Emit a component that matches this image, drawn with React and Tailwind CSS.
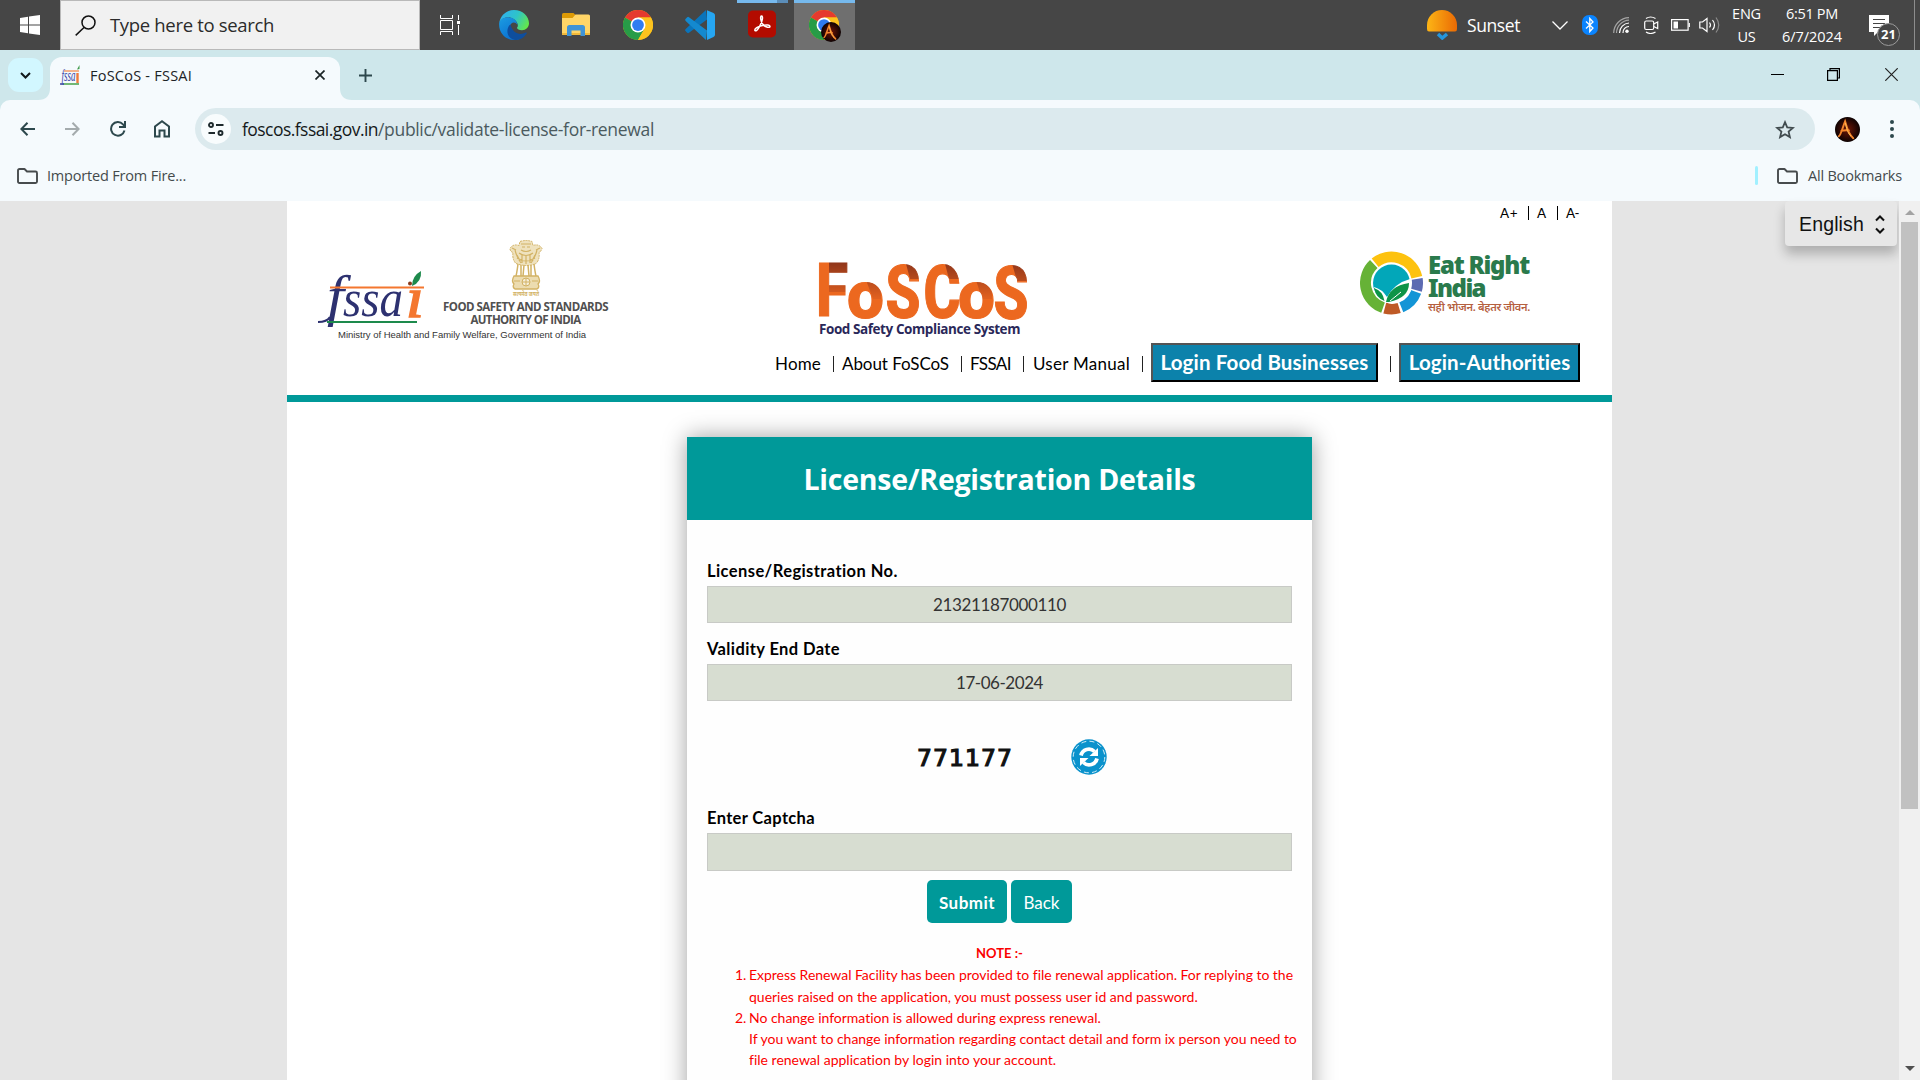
import React, { useLayoutEffect, useRef } from "react";

/* Spreads a single line of text evenly over the width of its box. */
function Fit({ className = "", children }) {
  const box = useRef(null);
  const text = useRef(null);
  useLayoutEffect(() => {
    const fit = () => {
      if (!box.current || !text.current) return;
      text.current.style.letterSpacing = "0px";
      const want = box.current.clientWidth;
      const got = text.current.getBoundingClientRect().width;
      const n = text.current.textContent.length;
      text.current.style.letterSpacing = `${(want - got) / Math.max(1, n)}px`;
    };
    fit();
    document.fonts?.ready.then(fit);
  }, []);
  return (
    <span ref={box} className={`block shrink-0 whitespace-nowrap ${className}`}>
      <span ref={text} className="inline-block">{children}</span>
    </span>
  );
}

function ChromeLogo({ size = 30 }) {
  return (
    <svg width={size} height={size} viewBox="0 0 48 48">
      <circle cx="24" cy="24" r="24" fill="#fbbc05" />
      <path d="M24 24 3.2 12A24 24 0 0 1 44.8 12H24z" fill="#e53a2e" />
      <path d="M3.2 12A24 24 0 0 0 24 48L34.4 30 24 24z" fill="#279c47" />
      <path d="M24 12h20.8A24 24 0 0 1 24 48l10.4-18z" fill="#fcc31e" />
      <circle cx="24" cy="24" r="12" fill="#fff" />
      <circle cx="24" cy="24" r="9.4" fill="#2f7cf0" />
    </svg>
  );
}

function EdgeLogo() {
  return (
    <svg width="30" height="30" viewBox="0 0 30 30">
      <defs>
        <linearGradient id="edgeTop" x1="0" y1="0.3" x2="1" y2="0.7">
          <stop offset="0" stopColor="#2fb0ee" />
          <stop offset="0.5" stopColor="#2ec4c9" />
          <stop offset="1" stopColor="#66e845" />
        </linearGradient>
        <linearGradient id="edgeLow" x1="0" y1="0" x2="0.6" y2="1">
          <stop offset="0" stopColor="#1b9de2" />
          <stop offset="1" stopColor="#0b6fd0" />
        </linearGradient>
      </defs>
      <path d="M.3 13C1.500 5 8 0 15 0c8.500 0 15 6.300 15 13.300 0 4-3.200 6.900-7 6.900-3.200 0-5.300-1.400-4.900-2.600.9-1.200 1-2.600.3-4.100C16.800 9.800 13 7.300 9 7.300 5 7.300 1.800 9.600.3 13z" fill="url(#edgeTop)" />
      <path d="M.2 12.700C1.500 9.300 5 7.200 9 7.200c5 0 9.300 3.500 9.300 7.500-2-3.500-6.500-2.800-7.300 1.500C10 22 14 27 20.500 28.900 18.500 29.800 17 30 15 30 6.500 30-.8 22.500.2 12.700z" fill="url(#edgeLow)" />
      <path d="M11.500 14c-5.500 5.500-3.500 14.500 4.500 16 5 .3 9.500-2.500 11.800-6.700.3-.7-.3-1.100-1-.7-6 3.200-13.800.5-15.300-8.600z" fill="#0e4e9e" />
    </svg>
  );
}

function FlameA({ size }) {
  return (
    <svg width={size} height={size} viewBox="0 0 26 26">
      <defs>
        <radialGradient id="flame">
          <stop offset="0" stopColor="#6e1606" />
          <stop offset="1" stopColor="#0d0202" />
        </radialGradient>
      </defs>
      <circle cx="13" cy="13" r="13" fill="url(#flame)" />
      <path d="M4 20c2-.5 3.500-8 6.500-15.500C12 9 13 17 19 22M6.500 14.500c3-.8 5-1 8-.5" stroke="#f5852c" strokeWidth="2" fill="none" strokeLinecap="round" />
      <path d="M10.700 6c1 5 3 12 6 14" stroke="#ffc65c" strokeWidth=".9" fill="none" />
    </svg>
  );
}

function Taskbar() {
  return (
    <div className="flex h-[50px] w-full shrink-0 items-center bg-[#464646] text-white">
      <div className="flex w-[60px] justify-center">
        <svg width="20" height="20" viewBox="0 0 20 20" fill="#fff">
          <path d="M0 2.900 8 1.800V9.500H0zM9 1.600 20 0v9.500H9zM0 10.500h8v7.700l-8-1.100zM9 10.500h11V20L9 18.400z" />
        </svg>
      </div>
      <div className="flex h-[50px] w-[360px] items-center border border-[#b9b9b9] bg-[#f1f1f1] pl-[14px]">
        <svg width="21" height="21" viewBox="0 0 21 21" fill="none" stroke="#111" strokeWidth="1.500">
          <circle cx="13.500" cy="7.500" r="6.500" />
          <path d="M9 12.500.7 20.400" />
        </svg>
        <Fit className="ml-[14px] w-[164px] text-[18.500px] leading-6 text-[#2b2b2b]">Type here to search</Fit>
      </div>
      <svg className="ml-5" width="20" height="20" viewBox="0 0 20 20" fill="none" stroke="#fff" strokeWidth="1">
        <path d="M.5 0v3.500h12V0M.5 5.500h12v9H.5zM.5 20v-3.500h12V20M18.500 0v5M18.500 10v10" />
        <rect x="17" y="6" width="3" height="3" fill="#fff" stroke="none" />
      </svg>
      <div className="ml-[39px]"><EdgeLogo /></div>
      <svg className="ml-[33px]" width="28" height="24" viewBox="0 0 28 24">
        <path d="M0 1.500Q0 0 1.500 0h10L13.500 2v5H0z" fill="#dd9a05" />
        <path d="M0 5h10.500l3-3.500H26.500Q28 1.500 28 3v19H0z" fill="#ffd567" />
        <path d="M0 20h28v2H0z" fill="#f1b93a" />
        <path d="M5 23V14.500Q5 12 7.500 12H20.500Q23 12 23 14.500V23H18.500V17.500H9.500V23z" fill="#3f93d6" />
      </svg>
      <div className="ml-[33px]"><ChromeLogo /></div>
      <svg className="ml-[32px]" width="30" height="30" viewBox="0 0 30 30">
        <path d="M22 9.500 4 22.800Q3 23.500 2.200 22.700L.5 21Q-.3 20 .7 19.100L21 0z" fill="#0a74bb" />
        <path d="M22 20.500 4 7.200Q3 6.500 2.200 7.300L.5 9Q-.3 10 .7 10.900L21 30z" fill="#1489cf" />
        <path d="M22 .2 28.500 3Q30 3.700 30 5.300V24.700Q30 26.300 28.500 27L22 29.900z" fill="#26a6f2" />
      </svg>
      <div className="ml-[22px] flex h-[50px] w-[51px] flex-col">
        <div className="flex h-[3px]">
          <div className="w-[40px] bg-[#76b9ed]" />
          <div className="w-[11px] bg-[#5b8db8]" />
        </div>
        <svg className="ml-[11px] mt-[7px]" width="28" height="28" viewBox="0 0 28 28">
          <rect y=".5" width="28" height="27" rx="5" fill="#b30b00" />
          <path d="M7 20.500c-1-1.500 3-4.300 7.500-5.100 4.500-.9 7.500-.3 7.500 1 0 1.800-4.500.9-7-2-2.500-3-3-8.400-1.500-8.400 1.800 0 1 5-1.500 9.700C10 19.500 8 21.700 7 20.500z" fill="none" stroke="#fff" strokeWidth="1.500" />
        </svg>
      </div>
      <div className="ml-[6px] h-[50px] w-[61px] border-t-[3px] border-[#76b9ed] bg-[#6f6f6f]">
        <div className="relative ml-[15px] mt-[7px] h-[32px] w-[32px]">
          <ChromeLogo />
          <div className="absolute left-[12px] top-[12px]"><FlameA size={20} /></div>
        </div>
      </div>

      <svg className="ml-auto" width="30" height="30" viewBox="0 0 30 30">
        <defs>
          <linearGradient id="sun"><stop offset="0" stopColor="#fdb515" /><stop offset="1" stopColor="#ea6a04" /></linearGradient>
        </defs>
        <path d="M2 21.500Q0 21.500 0 19V15a15 15 0 0 1 30 0v4q0 2.500-2 2.500z" fill="url(#sun)" />
        <path d="m11 24 4.300 4L20 24" fill="none" stroke="#2596dc" strokeWidth="3.500" />
      </svg>
      <Fit className="ml-[10px] w-[53px] pt-px text-[17.500px]">Sunset</Fit>
      <svg className="ml-[32px]" width="16" height="9" viewBox="0 0 16 9" fill="none" stroke="#fff" strokeWidth="1.300"><path d="m.5.500 7.500 7.500L15.500.500" /></svg>
      <svg className="ml-[14px]" width="16" height="20" viewBox="0 0 16 20">
        <rect width="16" height="20" rx="7" fill="#0a84ff" />
        <path d="m4 6.500 7 6.500-3.200 3.500V3.500L11 7l-7 6.500" fill="none" stroke="#fff" strokeWidth="1.300" />
      </svg>
      <svg className="ml-[15px]" width="17" height="17" viewBox="0 0 17 17" fill="none" stroke="#fff" strokeWidth="1.200">
        <path d="M10 16A6 6 0 0 1 16 9.500M6.500 16A10 10 0 0 1 16 6" />
        <path d="M3.500 16A13 13 0 0 1 16 3.200M.7 16A15.500 15.500 0 0 1 16 .7" stroke="#a5a5a5" />
        <circle cx="14" cy="14.300" r="1.700" fill="#fff" stroke="none" />
      </svg>
      <svg className="ml-[14px]" width="15" height="18" viewBox="0 0 15 18" fill="none" stroke="#fff" strokeWidth="1.200">
        <rect x=".7" y="5" width="9" height="8.500" rx="1.500" /><path d="m9.700 8 4-2v6.500l-4-2M2 2.500q4.500-3 9.500 0M2 16q4.500 3 9.500 0" />
      </svg>
      <svg className="ml-[12px]" width="19" height="12" viewBox="0 0 19 12" fill="none" stroke="#fff" strokeWidth="1.200">
        <rect x=".6" y=".6" width="16.500" height="10.600" /><rect x="2.500" y="2.500" width="4.500" height="7" fill="#fff" stroke="none" /><path d="M18.300 4v4" />
      </svg>
      <svg className="ml-[9px]" width="22" height="18" viewBox="0 0 22 18" fill="none" stroke="#fff" strokeWidth="1.200">
        <path d="M.8 6v6h2.700L8 15.500v-13L3.500 6zM10.500 6.500q2 2.500 0 5M13.500 4q4 5 0 10" /><path d="M17 1.500q5.500 7.500 0 15" stroke="#8b8b8b" />
      </svg>
      <div className="ml-[11px] mr-[2px] flex w-[29px] flex-col items-center text-[14.500px] leading-[23px]">
        <Fit className="w-[29px]">ENG</Fit><Fit className="w-[18px]">US</Fit>
      </div>
      <div className="ml-[19px] flex w-[60px] flex-col items-center text-[14.500px] leading-[23px]">
        <Fit className="w-[52px]">6:51 PM</Fit><Fit className="w-[60px]">6/7/2024</Fit>
      </div>
      <div className="relative ml-[27px] h-[30px] w-[31px]">
        <svg className="mt-[5px]" width="20" height="21" viewBox="0 0 20 21"><path d="M0 0h20v17H9l-4 4v-4H0z" fill="#fff" /><path d="M4 4.500h12M4 8.500h12M4 12.500h8" stroke="#444" strokeWidth="1.200" /></svg>
        <div className="absolute left-[8px] top-[13px] flex h-[23px] w-[23px] items-center justify-center rounded-full border border-[#9b9b9b] bg-[#464646] text-[13px] font-bold leading-none">21</div>
      </div>
      <div className="ml-[14px] mr-[5px] h-[50px] w-px bg-[#8d8d8d]" />
    </div>
  );
}

function FolderIcon() {
  return (
    <svg width="21" height="16" viewBox="0 0 21 16" fill="none" stroke="#474b4d" strokeWidth="1.900" strokeLinejoin="round">
      <path d="M1 2.500Q1 1 2.500 1H7.500L10 3.500h8.500Q20 3.500 20 5v8.500Q20 15 18.500 15h-16Q1 15 1 13.500z" />
    </svg>
  );
}

function TabStrip() {
  return (
    <div className="flex h-[50px] shrink-0 bg-[#cee7eb]">
      <div className="ml-2 mt-2 flex h-[34px] w-[35px] items-center justify-center rounded-[11px] bg-[#d2f7ff]">
        <svg width="11" height="7" viewBox="0 0 11 7" fill="none" stroke="#10181a" strokeWidth="2"><path d="m1 1 4.500 4.500L10 1" /></svg>
      </div>
      <svg className="ml-[-5px] self-end" width="12" height="12" viewBox="0 0 12 12"><path d="M12 0v12H0Q12 12 12 0" fill="#f5fafd" /></svg>
      <div className="mt-[7px] flex h-[43px] w-[290px] items-center rounded-t-[12px] bg-[#f5fafd] pb-[7px] pl-[10px]">
        <svg className="overflow-visible" width="20" height="20" viewBox="0 0 20 20">
          <text x="1.500" y="16" fontFamily="Liberation Serif" fontStyle="italic" fontSize="17" textLength="14" lengthAdjust="spacingAndGlyphs" fill="#3a45a5">fssa</text>
          <path d="M17.500 8v10" stroke="#f07a3c" strokeWidth="2.400" />
          <path d="M4 6h15" stroke="#f29b68" strokeWidth="1.500" /><path d="M17 4.500 19.500 0v4z" fill="#3f9a4a" />
          <path d="M3 19h16" stroke="#46a049" strokeWidth="1.500" /><path d="M0 19h4" stroke="#3a45a5" strokeWidth="1.500" />
        </svg>
        <Fit className="ml-[10px] w-[102px] pt-px text-[14.500px] text-[#1c2326]">FoSCoS - FSSAI</Fit>
        <svg className="ml-[123px]" width="10" height="10" viewBox="0 0 10 10" stroke="#1b2426" strokeWidth="1.700"><path d="m.5.500 9 9M9.500.500l-9 9" /></svg>
      </div>
      <svg className="self-end" width="12" height="12" viewBox="0 0 12 12"><path d="M0 0v12h12Q0 12 0 0" fill="#f5fafd" /></svg>
      <svg className="ml-[7px] mt-[19px]" width="13" height="13" viewBox="0 0 13 13" stroke="#2d484d" strokeWidth="1.900"><path d="M6.500 0v13M0 6.500h13" /></svg>
      <div className="ml-auto mr-[22px] mt-[18px] flex h-[13px] gap-[43px]">
        <svg width="13" height="13" viewBox="0 0 13 13" stroke="#000"><path d="M0 6.500h13" /></svg>
        <svg width="13" height="13" viewBox="0 0 13 13" fill="none" stroke="#000" strokeWidth="1.200"><path d="M.6 2.600h9.800v9.800H.6zM3 2.500V.600h9.400V10H10.500" /></svg>
        <svg className="ml-[2px]" width="13" height="13" viewBox="0 0 13 13" stroke="#222" strokeWidth="1.200"><path d="m.3.300 12.400 12.400M12.700.300.3 12.700" /></svg>
      </div>
    </div>
  );
}

function Toolbar() {
  return (
    <div className="shrink-0 bg-[#cee7eb]">
      <div className="flex h-[58px] items-center rounded-t-[10px] bg-[#f5fafd] pl-[20px]">
        <svg width="15" height="14" viewBox="0 0 15 14" fill="none" stroke="#2d484d" strokeWidth="2"><path d="M15 7H1.500M7.500.700 1.400 7l6.100 6.300" /></svg>
        <svg className="ml-[30px]" width="15" height="14" viewBox="0 0 15 14" fill="none" stroke="#a4abad" strokeWidth="2"><path d="M0 7h13.500M7.500.700 13.600 7l-6.100 6.300" /></svg>
        <svg className="ml-[30px]" width="16" height="16" viewBox="0 0 16 16" fill="none" stroke="#2d484d" strokeWidth="2"><path d="M14.500 9.500A6.800 6.800 0 1 1 13 3.300L14.800 5.300M15 0v6H9" /></svg>
        <svg className="ml-[28px]" width="16" height="18" viewBox="0 0 16 18" fill="none" stroke="#2d484d" strokeWidth="2"><path d="M1 16.500V6.500L8 1.300l7 5.200v10h-4.500V10.500h-5v6z" /></svg>
        <div className="ml-[25px] flex h-[42px] w-[1620px] items-center rounded-full bg-[#dceaee] pl-[6px]">
          <div className="flex h-[30px] w-[30px] items-center justify-center rounded-full bg-[#f8fcfd]">
            <svg width="16" height="14" viewBox="0 0 16 14" fill="none" stroke="#1e2a2d" strokeWidth="1.900"><circle cx="3" cy="3" r="2" /><path d="M8 3h7.500M.5 11H7" /><circle cx="12.500" cy="11" r="2" /></svg>
          </div>
          <div className="ml-[11px] flex pb-px text-[17.500px] leading-6">
            <Fit className="w-[136px] text-[#15191a]">foscos.fssai.gov.in</Fit>
            <Fit className="w-[276px] text-[#4b5a5e]">/public/validate-license-for-renewal</Fit>
          </div>
          <svg className="ml-auto mr-[20px]" width="20" height="19" viewBox="0 0 20 19" fill="none" stroke="#414c4f" strokeWidth="1.800"><path d="m10 2.200 2.200 5.200 5.700.500-4.300 3.700 1.300 5.500-4.900-2.900-4.900 2.900 1.300-5.500L2.100 7.900l5.700-.500z" /></svg>
        </div>
        <div className="ml-[20px]"><FlameA size={25} /></div>
        <svg className="ml-[30px]" width="4" height="18" viewBox="0 0 4 18" fill="#2d484d"><circle cx="2" cy="2" r="2" /><circle cx="2" cy="9" r="2" /><circle cx="2" cy="16" r="2" /></svg>
      </div>
      <div className="flex h-[43px] items-center bg-[#f5fafd] pb-[8px] pl-[17px] text-[14.500px] text-[#444a4c]">
        <FolderIcon />
        <Fit className="ml-[9px] w-[139px]">Imported From Fire...</Fit>
        <div className="ml-auto h-[19px] w-[3px] rounded bg-[#a2f0ff]" />
        <div className="ml-[19px]"><FolderIcon /></div>
        <Fit className="ml-[10px] mr-[18px] w-[94px]">All Bookmarks</Fit>
      </div>
    </div>
  );
}

function FssaiLogo() {
  return (
    <svg className="overflow-visible" width="110" height="58" viewBox="0 0 110 58">
      <g fontFamily="Liberation Serif" fontStyle="italic">
        <text x="9" y="44.500" fontSize="58" fill="#2d3170" textLength="17" lengthAdjust="spacingAndGlyphs">f</text>
        <text x="25" y="45.500" fontSize="53" fill="#2d3170" textLength="60" lengthAdjust="spacingAndGlyphs">ssa</text>
        <text x="88" y="47" fontSize="56" fill="#f4772f" stroke="#f4772f" strokeWidth="1.500" textLength="18" lengthAdjust="spacingAndGlyphs">ı</text>
      </g>
      <path d="M12 17.500h94" stroke="#f4772f" strokeWidth="2" />
      <path d="M9 52h90" stroke="#1d8a4c" strokeWidth="2.200" />
      <path d="M0 52q9 0 12-5" stroke="#2d3170" strokeWidth="2.200" fill="none" />
      <circle cx="92" cy="13.500" r="2" fill="#8a3b1c" />
      <path d="M94 16q0-10 9-15 1 11-9 15" fill="#1d8a4c" />
    </svg>
  );
}

function Emblem() {
  return (
    <svg width="34" height="58" viewBox="0 0 34 58" fill="none" stroke="#d2b264" strokeWidth="1">
      <path d="M11 1.500q6-2 12 0l1 4q6-2 9 3-1 3-3 4 1 7-3 11-9 4-20 0-4-4-3-11-3-1-3-4 3-5 9-3z" fill="#efe2be" strokeDasharray="2 .8" />
      <path d="M12 4h10M13 7h3M18 7h3M12 10q5 3 10 0M10 13q7 5 14 0M6 10q2 8 6 13M28 10q-2 8-6 13M13 14v9M17 15v9M21 14v9M8 15l3 6M26 15l-3 6M3 8l4 2M31 8l-4 2M8 18q9 6 18 0" strokeWidth="1.200" />
      <path d="M9 24q-1 8-2 12M12 25v11M15 25l-1 11M19 25l1 11M22 25v11M25 24q1 8 2 12" strokeWidth="1.500" />
      <path d="M5 36h24q3 5 0 8 2 3-1 5H6q-3-2-1-5-3-3 0-8z" fill="#ecdcb0" strokeWidth="1.300" />
      <circle cx="17" cy="42" r="4" fill="#f6eed8" /><path d="M13 42h8M17 38v8M5 41h6M23 41h6" />
      <text x="4" y="56" fontSize="5.500" fill="#d2b264" stroke="none" textLength="26" lengthAdjust="spacingAndGlyphs" fontFamily="Noto Sans, sans-serif">सत्यमेव जयते</text>
    </svg>
  );
}

function FoscosLogo() {
  const letters = [
    ["F", -3, 54, 75, 32],
    ["o", 28, 55.500, 66, 37],
    ["S", 66.500, 55.500, 75, 35],
    ["C", 104.500, 55.500, 75, 37],
    ["o", 139, 55.500, 66, 37],
    ["S", 174.500, 56.500, 75, 35],
  ];
  return (
    <svg className="overflow-visible" width="209" height="59" viewBox="0 0 209 59" fontFamily="Roboto" fontWeight="800">
      <defs>
        <linearGradient id="fold" gradientUnits="userSpaceOnUse" x1="0" y1="0" x2="0" y2="36">
          <stop offset="0" stopColor="#8f351a" /><stop offset="1" stopColor="#e0601f" />
        </linearGradient>
        <pattern id="ribbon" patternUnits="userSpaceOnUse" x="-4" y="-4" width="220" height="66" viewBox="-4 -4 220 66">
          <path d="M-4-4h220v66H-4z" fill="#ec681f" />
          <path d="M10-4h20v34H10zM47 18h15v19H54zM86-2h16v19H91zM125-2h15v19h-10zM157 18h16v19h-10zM192-2h17v21h-11z" fill="url(#fold)" />
        </pattern>
      </defs>
      {letters.map(([c, x, y, size, w], i) => (
        <text key={i} x={x} y={y} fontSize={size} textLength={w} lengthAdjust="spacingAndGlyphs" fill="url(#ribbon)" stroke="url(#ribbon)" strokeWidth="1.200">{c}</text>
      ))}
    </svg>
  );
}

function EatRightMark() {
  const arc = (a, b) => {
    const p = (r, t) => `${(31.500 + r * Math.cos((t * Math.PI) / 180)).toFixed(2)} ${(32 + r * Math.sin((t * Math.PI) / 180)).toFixed(2)}`;
    return `M${p(26, a)}A26 26 0 0 1 ${p(26, b)}`;
  };
  return (
    <svg width="63" height="65" viewBox="0 0 63 65" fill="none" strokeWidth="11">
      <path d={arc(-129, -13)} stroke="#fdc20f" />
      <path d={arc(-9, 16)} stroke="#5d6bb2" />
      <path d={arc(20, 68)} stroke="#1395d6" />
      <path d={arc(73, 105)} stroke="#bf5a26" />
      <path d={arc(109, 227)} stroke="#66b236" />
      <circle cx="31.500" cy="32" r="18.500" fill="#02a7b9" />
      <path d="M14 36q8 2 13 10Q35 32 50 28l1 12q-5 12-19 13-14-2-18-17z" fill="#fff" />
      <path d="M26 51q3-16 23-19 0 15-20 19z" fill="#0d9447" />
      <path d="M14 37q9 3 10.500 13Q16 47 14 37z" fill="#0d9447" />
      <path d="m30 50 11-9" stroke="#fff" strokeWidth="1" />
    </svg>
  );
}

function SiteHeader() {
  return (
    <header className="flex h-[201px] flex-col border-b-[7px] border-[#009999] font-[Lato,sans-serif] text-black">
      <div className="flex h-[24px] items-center justify-end pr-[33px] text-[13.500px]">
        <Fit className="w-[18px]">A+</Fit>
        <span className="ml-[10px] h-[14px] w-px bg-black" />
        <Fit className="ml-[8px] w-[9px]">A</Fit>
        <span className="ml-[11px] h-[14px] w-px bg-black" />
        <Fit className="ml-[8px] w-[13px]">A-</Fit>
      </div>
      <div className="flex h-[114px] items-start pl-[31px]">
        <div className="pt-[15px]">
          <div className="flex">
            <div className="pt-[30px]"><FssaiLogo /></div>
            <div className="ml-[15px] flex w-[165px] flex-col items-center font-['Open_Sans',sans-serif] text-[11.500px] font-bold leading-[13px] text-[#505050]">
              <Emblem />
              <Fit className="mt-[2px] w-[165px]">FOOD SAFETY AND STANDARDS</Fit>
              <Fit className="w-[110px]">AUTHORITY OF INDIA</Fit>
            </div>
          </div>
          <Fit className="ml-[20px] w-[248px] font-['Liberation_Sans',sans-serif] text-[9.500px] leading-[14px] text-[#333]">Ministry of Health and Family Welfare, Government of India</Fit>
        </div>
        <div className="ml-[211px] pt-[37px]">
          <FoscosLogo />
          <Fit className="w-[201px] font-['Open_Sans',sans-serif] text-[13.500px] font-bold leading-[17px] text-[#2a2859]">Food Safety Compliance System</Fit>
        </div>
        <div className="ml-[332px] flex pt-[26px]">
          <EatRightMark />
          <div className="ml-[5px] pt-[2px] font-['Noto_Sans',sans-serif] font-black text-[#2a7a4c]">
            <Fit className="w-[101px] text-[24px] leading-[23px]">Eat Right</Fit>
            <Fit className="w-[57px] text-[24px] leading-[23px]">India</Fit>
            <Fit className="w-[101px] text-[11px] font-semibold leading-[15px] text-[#b5603f]">सही भोजन. बेहतर जीवन.</Fit>
          </div>
        </div>
      </div>
      <nav className="mt-[4px] flex h-[39px] items-center justify-end pr-[32px] text-[17px]">
        <Fit className="w-[46px] pt-[2px]">Home</Fit>
        <span className="ml-[12px] mt-[3px] h-[16px] w-px bg-[#222]" />
        <Fit className="ml-[8px] w-[107px] pt-[2px]">About FoSCoS</Fit>
        <span className="ml-[12px] mt-[3px] h-[16px] w-px bg-[#222]" />
        <Fit className="ml-[8px] w-[41px] pt-[2px]">FSSAI</Fit>
        <span className="ml-[12px] mt-[3px] h-[16px] w-px bg-[#222]" />
        <Fit className="ml-[9px] w-[97px] pt-[2px]">User Manual</Fit>
        <span className="ml-[12px] mr-[8px] mt-[3px] h-[16px] w-px bg-[#222]" />
        <button className="flex h-[39px] w-[227px] items-center justify-center border-2 border-b-black border-l-[#545454] border-r-black border-t-[#545454] bg-[#0c82ab] pb-px text-[20.500px] font-bold text-white">
          <Fit className="w-[208px]">Login Food Businesses</Fit>
        </button>
        <span className="ml-[12px] mr-[8px] mt-[3px] h-[16px] w-px bg-[#222]" />
        <button className="flex h-[39px] w-[181px] items-center justify-center border-2 border-b-black border-l-[#545454] border-r-black border-t-[#545454] bg-[#0c82ab] pb-px text-[20.500px] font-bold text-white">
          <Fit className="w-[162px]">Login-Authorities</Fit>
        </button>
      </nav>
    </header>
  );
}

function RefreshIcon() {
  return (
    <svg width="36" height="36" viewBox="0 0 36 36" fill="none">
      <circle cx="18" cy="18" r="17.700" fill="#0a92cc" />
      <circle cx="18" cy="18" r="15.800" stroke="#d5eef8" strokeWidth="1" strokeDasharray="5 3.270" />
      <path d="M10 16.500A8 8 0 0 1 23.500 12.500M26 19.500A8 8 0 0 1 12.500 23.500" stroke="#fff" strokeWidth="3.800" />
      <path d="M27 9v8h-8.500zM9 27v-8h8.500z" fill="#fff" />
    </svg>
  );
}

function LicenseCard() {
  return (
    <section className="ml-[400px] mt-[35px] h-[700px] w-[625px] bg-[#fefefe] font-[Lato,sans-serif] text-black shadow-[0_0_22px_rgba(0,0,0,0.38)]">
      <div className="flex h-[83px] items-center justify-center bg-[#009999] font-['Open_Sans',sans-serif] text-[28.500px] font-bold text-white">
        <Fit className="w-[392px] pt-px">License/Registration Details</Fit>
      </div>
      <div className="px-[20px] pt-[39px]">
        <Fit className="w-[191px] text-[16.500px] font-bold leading-[24px]">License/Registration No.</Fit>
        <div className="mt-[3px] flex h-[37px] items-center justify-center border border-[#c8cac6] bg-[#d7ddd1] pt-px text-[17px] text-[#333]">
          <Fit className="w-[133px]">21321187000110</Fit>
        </div>
        <Fit className="mt-[14px] w-[133px] text-[16.500px] font-bold leading-[24px]">Validity End Date</Fit>
        <div className="mt-[3px] flex h-[37px] items-center justify-center border border-[#c8cac6] bg-[#d7ddd1] pt-px text-[17px] text-[#333]">
          <Fit className="w-[87px]">17-06-2024</Fit>
        </div>
        <div className="mt-[38px] flex h-[36px] items-center pl-[210px]">
          <Fit className="w-[96px] pt-[2px] font-['DejaVu_Sans',sans-serif] text-[23.500px] leading-6 text-[#111] [-webkit-text-stroke:1.200px_#111]">771177</Fit>
          <div className="ml-[58px]"><RefreshIcon /></div>
        </div>
        <Fit className="mt-[31px] w-[108px] text-[16.500px] font-bold leading-[24px]">Enter Captcha</Fit>
        <div className="mt-[3px] h-[38px] border border-[#c8cac6] bg-[#d7ddd1]" />
        <div className="mt-[9px] flex justify-center gap-[4px] text-[17px] text-white">
          <button className="flex h-[43px] w-[80px] items-center justify-center rounded-[5px] bg-[#009999] pt-[3px] font-bold"><Fit className="w-[56px]">Submit</Fit></button>
          <button className="flex h-[43px] w-[61px] items-center justify-center rounded-[5px] bg-[#009999] pt-[3px]"><Fit className="w-[36px]">Back</Fit></button>
        </div>
      </div>
      <div className="pt-[20px] text-[14px] leading-[21.300px] text-[#fb0000]">
        <Fit className="mx-auto w-[47px] text-[13px] font-bold">NOTE :-</Fit>
        <div className="flex pl-[48px]">
          <Fit className="w-[11px]">1.</Fit>
          <div className="ml-[3px]">
            <Fit className="w-[544px]">Express Renewal Facility has been provided to file renewal application. For replying to the</Fit>
            <Fit className="w-[449px]">queries raised on the application, you must possess user id and password.</Fit>
          </div>
        </div>
        <div className="flex pl-[48px]">
          <Fit className="w-[11px]">2.</Fit>
          <div className="ml-[3px]">
            <Fit className="w-[352px]">No change information is allowed during express renewal.</Fit>
            <Fit className="w-[548px]">If you want to change information regarding contact detail and form ix person you need to</Fit>
            <Fit className="w-[307px]">file renewal application by login into your account.</Fit>
          </div>
        </div>
      </div>
    </section>
  );
}

function PageView() {
  return (
    <div className="flex min-h-0 flex-1 bg-[#e5e5e5]">
      <main className="ml-[287px] w-[1325px] overflow-hidden bg-white">
        <SiteHeader />
        <LicenseCard />
      </main>
      <div className="ml-auto mr-[2px] flex h-[45px] w-[112px] items-center rounded-[4px] bg-[#e7e7e7] pl-[14px] font-['Liberation_Sans',sans-serif] text-[19.500px] text-[#111] shadow-[0_8px_12px_rgba(0,0,0,0.24)]">
        <Fit className="w-[65px] pt-[2px]">English</Fit>
        <svg className="ml-[11px] mt-px" width="10" height="19" viewBox="0 0 10 19" fill="none" stroke="#111" strokeWidth="2"><path d="m1 5.500 4-4 4 4M1 13.500l4 4 4-4" /></svg>
      </div>
      <div className="flex w-[21px] shrink-0 flex-col items-center bg-[#f0f0f0]">
        <svg className="mt-[9px]" width="10" height="5" viewBox="0 0 10 5" fill="#a3a3a3"><path d="M0 5h10L5 0z" /></svg>
        <div className="mt-[7px] h-[587px] w-[17px] bg-[#c1c1c1]" />
        <svg className="mb-[9px] mt-auto" width="10" height="5" viewBox="0 0 10 5" fill="#505050"><path d="M0 0h10L5 5z" /></svg>
      </div>
    </div>
  );
}

export default function App() {
  return (
    <div className="flex h-[1080px] w-[1920px] flex-col overflow-hidden font-['Open_Sans',sans-serif]">
      <Taskbar />
      <TabStrip />
      <Toolbar />
      <PageView />
    </div>
  );
}
